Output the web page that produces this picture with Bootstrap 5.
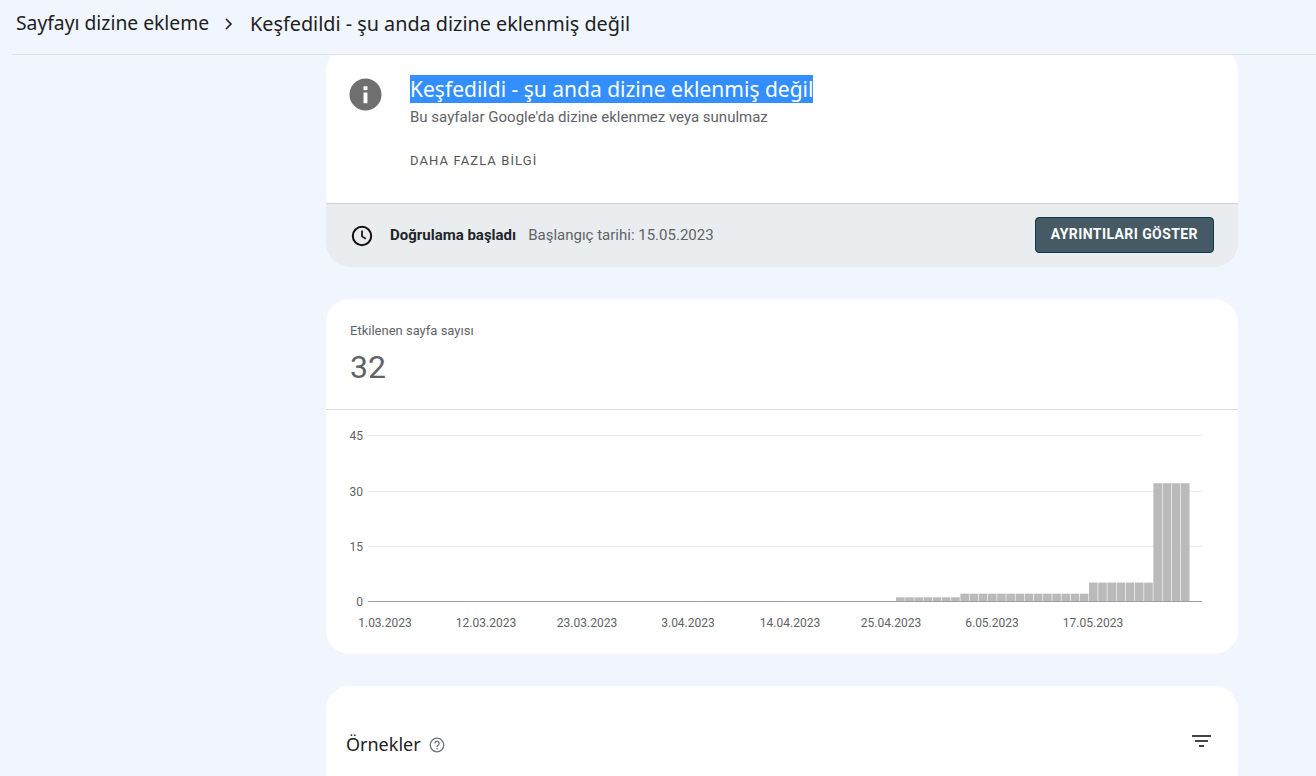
<!DOCTYPE html>
<html lang="tr">
  <head>
    <meta charset="UTF-8" />
    <meta name="viewport" content="width=device-width, initial-scale=1.0" />
    <title>Keşfedildi - şu anda dizine eklenmiş değil</title>
    <link
      href="https://cdn.jsdelivr.net/npm/bootstrap@5.3.0/dist/css/bootstrap.min.css"
      rel="stylesheet"
    />
    <style>
      body {
        background: #f1f5fe;
        font-family: Roboto, "Liberation Sans", sans-serif;
        height: 776px;
        overflow: hidden;
      }
      .top-bar {
        height: 55px;
        margin-left: 12px;
        padding: 0 0 7px 4px;
        border-bottom: 1px solid #dfe1e3;
        font-family: "Noto Sans", sans-serif;
        color: #202124;
        position: relative;
        z-index: 2;
      }
      .crumb-parent {
        font-size: 19.3px;
      }
      .crumb-current {
        font-size: 19.8px;
      }
      .crumb-arrow {
        margin: 0 16px 0 15px;
      }
      .page-scroll {
        height: 721px;
        overflow: hidden;
        padding-left: 326px;
      }
      .page-col {
        width: 912px;
        margin-top: -8px;
      }
      .panel {
        background: #fff;
        border-radius: 24px;
        margin-bottom: 32px;
        overflow: hidden;
      }
      .status-head {
        height: 156px;
        padding: 28px 0 0 23px;
      }
      .info-icon {
        width: 36px;
        margin-right: 25px;
      }
      .info-icon svg {
        margin-top: 3px;
      }
      .selected-title {
        background: #338fff;
        color: #fff;
        font-family: "Noto Sans", sans-serif;
        font-size: 21px;
        line-height: 28px;
        display: inline-block;
      }
      .status-sub {
        font-size: 15px;
        color: #5f6368;
        line-height: 20px;
        margin-top: 3px;
      }
      .more-link {
        font-size: 13px;
        letter-spacing: 1.1px;
        color: #555;
        margin-top: 26px;
        line-height: 16px;
      }
      .status-foot {
        height: 64px;
        background: #e9edf0;
        border-top: 1px solid #cfd2d4;
        padding: 0 24px;
        font-size: 15px;
      }
      .status-foot strong {
        margin-right: 12px;
        font-size: 15px;
      }
      .start-date {
        color: #5f6368;
      }
      .detail-btn {
        background: #455a64;
        border: 1px solid #0b3a49;
        border-radius: 4px;
        color: #fff;
        font-size: 14px;
        font-weight: 700;
        letter-spacing: 0.42px;
        height: 36px;
        padding: 0 15px;
        margin-bottom: 2px;
      }
      .metric-box {
        height: 111px;
        padding: 24px 24px 0;
        border-bottom: 1px solid #dadce0;
      }
      .metric-label {
        font-size: 13px;
        color: #5f6368;
        line-height: 16px;
      }
      .metric-value {
        font-size: 32px;
        color: #5f6368;
        line-height: 40px;
        margin-top: 8px;
      }
      .chart-box {
        height: 244px;
      }
      .chart-box text {
        font-size: 12px;
        fill: #5f6368;
        font-family: Roboto, "Liberation Sans", sans-serif;
      }
      .samples-title {
        font-family: "Noto Sans", sans-serif;
        font-size: 18px;
        color: #202124;
      }
      .samples-head {
        height: 110px;
        padding: 45px 27px 0 20px;
      }
    </style>
  </head>
  <body>
    <div class="top-bar d-flex align-items-center">
      <span class="crumb-parent">Sayfayı dizine ekleme</span>
      <svg class="crumb-arrow" width="10" height="14" viewBox="0 0 10 14">
        <path d="M2 2l5 5-5 5" fill="none" stroke="#202124" stroke-width="1.6" />
      </svg>
      <span class="crumb-current">Keşfedildi - şu anda dizine eklenmiş değil</span>
    </div>

    <div class="page-scroll">
      <div class="page-col">
        <div class="panel">
          <div class="status-head d-flex">
            <div class="info-icon">
              <svg width="33" height="33" viewBox="0 0 34 34" class="d-block">
                <circle cx="17" cy="17" r="16.5" fill="#6f6f6f" />
                <rect x="15" y="15" width="4" height="11" fill="#fff" />
                <rect x="15" y="8.5" width="4" height="4" fill="#fff" />
              </svg>
            </div>
            <div>
              <div class="selected-title">Keşfedildi - şu anda dizine eklenmiş değil</div>
              <div class="status-sub">Bu sayfalar Google'da dizine eklenmez veya sunulmaz</div>
              <div class="more-link">DAHA FAZLA BİLGİ</div>
            </div>
          </div>
          <div class="status-foot d-flex align-items-center">
            <svg width="24" height="24" viewBox="0 0 24 24" class="me-3">
              <circle cx="12" cy="12" r="9.2" fill="none" stroke="#111" stroke-width="2" />
              <path d="M12 6.5V12.4l3.8 2.4" fill="none" stroke="#111" stroke-width="1.7" />
            </svg>
            <strong>Doğrulama başladı</strong>
            <span class="start-date">Başlangıç tarihi: 15.05.2023</span>
            <button type="button" class="btn detail-btn ms-auto">AYRINTILARI GÖSTER</button>
          </div>
        </div>

        <div class="panel">
          <div class="metric-box">
            <div class="metric-label">Etkilenen sayfa sayısı</div>
            <div class="metric-value">32</div>
          </div>
          <div class="chart-box">
            <svg id="chart" width="912" height="244" viewBox="0 0 912 244" class="d-block"></svg>
          </div>
        </div>

        <div class="panel">
          <div class="samples-head d-flex justify-content-between">
            <div class="d-flex align-items-center align-self-start gap-2">
              <span class="samples-title">Örnekler</span>
              <svg width="16" height="16" viewBox="0 0 16 16">
                <circle cx="8" cy="8" r="6.8" fill="none" stroke="#70757a" stroke-width="1.3" />
                <path d="M5.9 6.4a2.1 2.1 0 1 1 3.4 1.6c-.8.6-1.3 1-1.3 2" fill="none" stroke="#70757a" stroke-width="1.3" />
                <rect x="7.3" y="11" width="1.4" height="1.4" fill="#70757a" />
              </svg>
            </div>
            <svg width="19" height="12" viewBox="0 0 19 12" class="mt-1">
              <rect x="0" y="0" width="19" height="2" fill="#444" />
              <rect x="3" y="5" width="13" height="2" fill="#444" />
              <rect x="7" y="10" width="5" height="2" fill="#444" />
            </svg>
          </div>
        </div>
      </div>
    </div>

    <script src="https://cdn.jsdelivr.net/npm/bootstrap@5.3.0/dist/js/bootstrap.bundle.min.js"></script>
    <script>
      // chart coordinates are relative to the card (x - 326, y - 410)
      const baseY = 191;
      const perPage = 3.68;
      const step = 9.19;
      const firstBar = 55.4;
      let svg = "";

      [[45, 25], [30, 81], [15, 136]].forEach(([v, y]) => {
        svg += `<line x1="42" x2="876" y1="${y + 0.5}" y2="${y + 0.5}" stroke="#ebebeb" />`;
        svg += `<text x="37" y="${y + 5}" text-anchor="end">${v}</text>`;
      });
      svg += `<text x="37" y="${baseY + 5}" text-anchor="end">0</text>`;

      // [first day index, number of days, value]
      const runs = [[56, 7, 1], [63, 14, 2], [77, 7, 5], [84, 4, 32]];
      runs.forEach(([start, count, value]) => {
        for (let i = 0; i < count; i++) {
          const x = firstBar + (start + i) * step;
          const h = value * perPage;
          svg += `<rect x="${x}" y="${baseY - h}" width="${step - 0.6}" height="${h}" fill="#bababa" />`;
        }
      });
      svg += `<line x1="42" x2="876" y1="${baseY + 0.5}" y2="${baseY + 0.5}" stroke="#9e9e9e" />`;

      [["1.03.2023", 59], ["12.03.2023", 160], ["23.03.2023", 261], ["3.04.2023", 362],
       ["14.04.2023", 464], ["25.04.2023", 565], ["6.05.2023", 666], ["17.05.2023", 767]].forEach(([t, x]) => {
        svg += `<text x="${x}" y="217" text-anchor="middle">${t}</text>`;
      });
      document.getElementById("chart").innerHTML = svg;
    </script>
  </body>
</html>
